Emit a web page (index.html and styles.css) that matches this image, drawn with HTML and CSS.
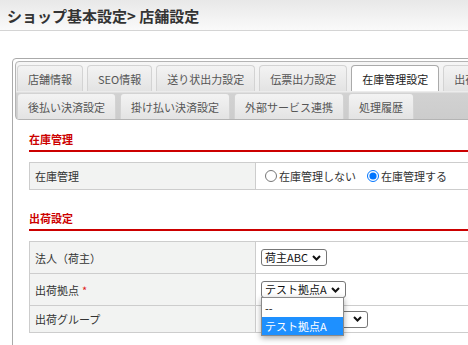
FILE: index.html
```html
<!DOCTYPE html>
<html lang="ja">
<head>
<meta charset="utf-8">
<title>店舗設定</title>
<link rel="stylesheet" href="styles.css">
</head>
<body>
<header class="page-header">
  <h1 class="page-title">ショップ基本設定&gt; 店舗設定</h1>
</header>
<main class="main">
  <div class="tabs">
    <nav class="tab-nav">
      <ul class="tab-row">
        <li class="tab">店舗情報</li>
        <li class="tab">SEO情報</li>
        <li class="tab">送り状出力設定</li>
        <li class="tab">伝票出力設定</li>
        <li class="tab tab-active">在庫管理設定</li>
        <li class="tab">出荷設定</li>
      </ul>
      <ul class="tab-row">
        <li class="tab">後払い決済設定</li>
        <li class="tab">掛け払い決済設定</li>
        <li class="tab">外部サービス連携</li>
        <li class="tab">処理履歴</li>
      </ul>
    </nav>
    <section class="panel">
      <h2 class="section-title">在庫管理</h2>
      <div class="form-grid">
        <div class="cell label">在庫管理</div>
        <div class="cell value">
          <label class="radio"><input type="radio" name="stock" class="radio-input"><span>在庫管理しない</span></label>
          <label class="radio"><input type="radio" name="stock" class="radio-input" checked><span>在庫管理する</span></label>
        </div>
      </div>

      <h2 class="section-title section-gap">出荷設定</h2>
      <div class="form-grid">
        <div class="cell label row-tall">法人（荷主）</div>
        <div class="cell value row-tall">
          <div class="select"><span class="select-text">荷主ABC</span><svg class="chev" width="9" height="6" viewBox="0 0 9 6"><path d="M1 1 L4.5 4.5 L8 1" fill="none" stroke="#111" stroke-width="2"/></svg></div>
        </div>
        <div class="cell label row-tall">出荷拠点 <span class="req">*</span></div>
        <div class="cell value row-tall">
          <div class="select-wrap">
            <div class="select"><span class="select-text">テスト拠点A</span><svg class="chev" width="9" height="6" viewBox="0 0 9 6"><path d="M1 1 L4.5 4.5 L8 1" fill="none" stroke="#111" stroke-width="2"/></svg></div>
            <ul class="dropdown">
              <li class="option">--</li>
              <li class="option option-selected">テスト拠点A</li>
            </ul>
          </div>
        </div>
        <div class="cell label row-short">出荷グループ</div>
        <div class="cell value row-short">
          <div class="select select-wide"><span class="select-text"></span><svg class="chev" width="9" height="6" viewBox="0 0 9 6"><path d="M1 1 L4.5 4.5 L8 1" fill="none" stroke="#111" stroke-width="2"/></svg></div>
        </div>
      </div>
    </section>
  </div>
</main>
</body>
</html>
```

FILE: styles.css
```css
* { box-sizing: border-box; }
html, body {
  margin: 0;
  padding: 0;
  overflow: hidden;
  background: #fff;
}
body {
  width: 468px;
  height: 345px;
  font-family: "Noto Sans CJK JP", "Noto Sans", sans-serif;
  font-size: 11px;
  color: #333;
}
.page-header {
  height: 31px;
  border-bottom: 1px solid #d4d4d4;
  background: linear-gradient(#e8e8e8, #fafafa);
  padding-left: 7px;
  display: flex;
  align-items: center;
}
.page-title {
  margin: 0;
  font-size: 15px;
  font-weight: bold;
  line-height: 1;
  color: #333;
}
.main {
  padding: 27px 0 0 12px;
}
.tabs {
  width: 640px;
  min-height: 320px;
  border: 1px solid #aaa;
  border-radius: 4px;
  padding: 2px;
}
.tab-nav {
  border: 1px solid #b4b4b4;
  border-radius: 4px;
  background: linear-gradient(#f6f6f6 0, #ececec 30px, #d2d2d2 31px, #cccccc 100%);
  padding: 3px 1px 0;
  display: flex;
  flex-direction: column;
  gap: 2px;
}
.tab-row {
  list-style: none;
  margin: 0;
  padding: 0;
  display: flex;
  gap: 4px;
}
.tab {
  height: 26px;
  padding: 0 10px;
  border: 1px solid #d3d3d3;
  border-bottom: 0;
  border-radius: 4px 4px 0 0;
  background: linear-gradient(#f3f3f3, #e3e3e3);
  color: #555;
  display: flex;
  align-items: center;
  white-space: nowrap;
}
.tab-active {
  background: #fff;
  border-color: #aaa;
  color: #212121;
}
.panel {
  padding: 11px 0 0 14px;
}
.section-title {
  margin: 0 0 10px;
  padding-bottom: 3px;
  font-size: 11px;
  line-height: 16px;
  font-weight: bold;
  color: #cc0000;
  border-bottom: 2px solid #cc0000;
}
.section-gap {
  margin-top: 20px;
}
.form-grid {
  display: grid;
  grid-template-columns: 226px 1fr;
  border-top: 1px solid #cdcdcd;
  border-left: 1px solid #cdcdcd;
}
.cell {
  height: 27px;
  border-right: 1px solid #cdcdcd;
  border-bottom: 1px solid #cdcdcd;
  display: flex;
  align-items: center;
  padding-left: 5px;
}
.label {
  background: #f2f3f2;
  color: #333;
}
.value {
  background: #fff;
}
.row-tall { height: 32px; }
.row-short { height: 27px; }
.req {
  color: #e02020;
  margin-left: 3px;
}
.radio {
  display: inline-flex;
  align-items: center;
  margin-right: 7px;
  color: #333;
}
.radio-input {
  width: 12px;
  height: 12px;
  margin: 0 2px 0 4px;
}
.select-wrap {
  position: relative;
}
.select {
  display: inline-flex;
  align-items: center;
  justify-content: space-between;
  height: 17px;
  border: 1px solid #767676;
  border-radius: 3px;
  padding: 0 5px 0 3px;
  gap: 4px;
  background: #fff;
  color: #111;
  line-height: 1;
}
.select-wide {
  width: 107px;
}
.chev {
  display: block;
  flex: none;
}
.dropdown {
  position: absolute;
  left: 0;
  top: 16px;
  z-index: 5;
  width: 83px;
  margin: 0;
  padding: 0;
  list-style: none;
  background: #fff;
  border: 1px solid #8a8a8a;
  box-shadow: 0 2px 6px rgba(0, 0, 0, 0.35);
  color: #111;
}
.option {
  height: 19px;
  padding-left: 3px;
  display: flex;
  align-items: center;
}
.option-selected {
  height: 18px;
  background: #1e90ff;
  color: #fff;
}
```
